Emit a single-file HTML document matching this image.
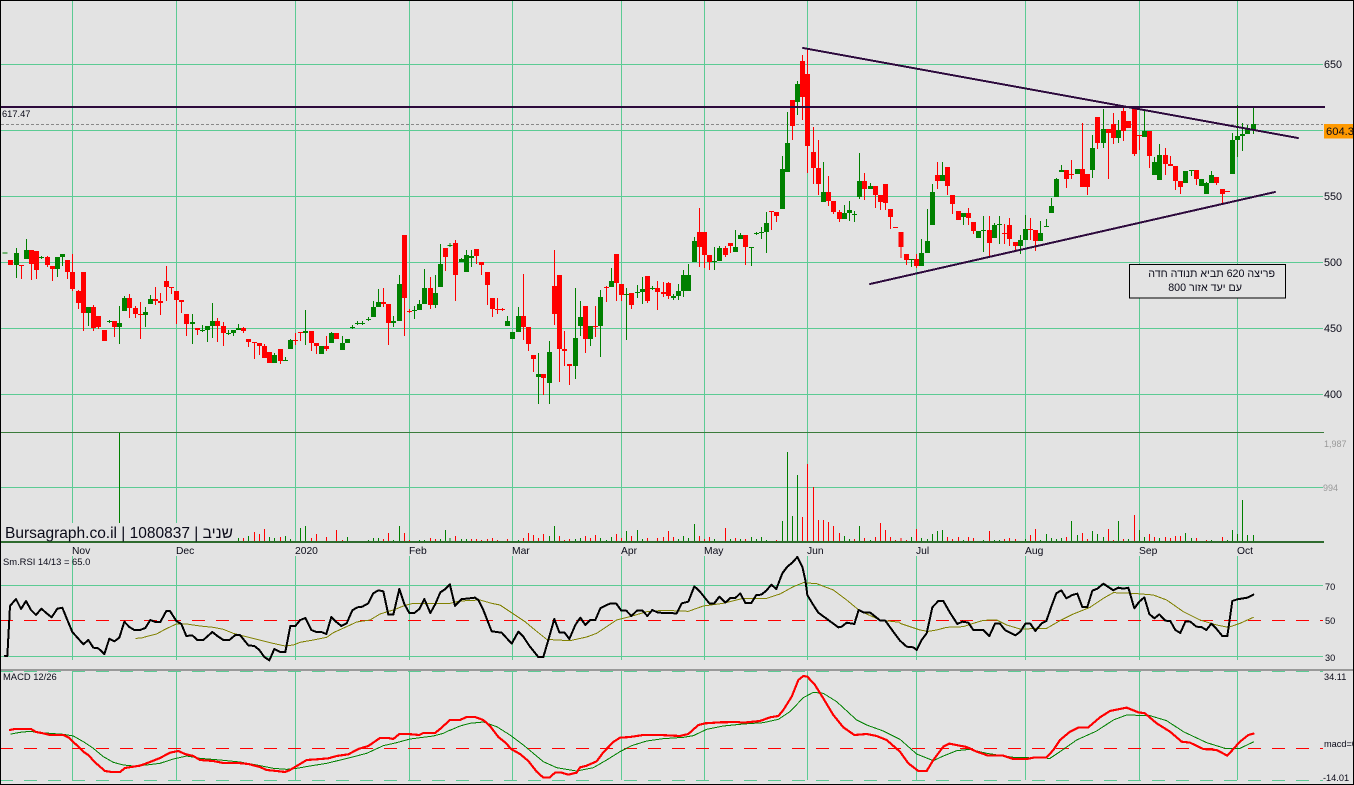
<!DOCTYPE html>
<html lang="en"><head><meta charset="utf-8"><title>Bursagraph</title>
<style>
html,body{margin:0;padding:0;background:#e3e3e3;width:1354px;height:785px;overflow:hidden}
svg{display:block;position:absolute;left:0;top:0}
text{font-family:"Liberation Sans","Noto Sans CJK JP",sans-serif;fill:#0a0a18}
.c{shape-rendering:crispEdges;fill:none}
.w3{stroke-width:3}.b{stroke-width:15}
.g{stroke:#008000}.r{stroke:#ff0000}
.l{fill:none;shape-rendering:crispEdges;stroke-linejoin:round;stroke-linecap:round}
.k{stroke:#000;stroke-width:6}.o{stroke:#808000;stroke-width:3}.m{stroke:#ff0000;stroke-width:6.5}.n{stroke:#008000;stroke-width:3}
</style></head><body>
<svg width="1354" height="785" viewBox="0 0 1354 785" xmlns="http://www.w3.org/2000/svg">
<rect width="1354" height="785" fill="#e3e3e3"/>
<!-- grid -->
<path class="c" stroke="#5ccb94" d="M72.5 1V432M176.5 1V432M295.5 1V432M409.5 1V432M512.5 1V432M621.5 1V432M704.5 1V432M807.5 1V432M916.5 1V432M1025.5 1V432M1139.5 1V432M1237.5 1V432
M72.5 433V541M176.5 433V541M295.5 433V541M409.5 433V541M512.5 433V541M621.5 433V541M704.5 433V541M807.5 433V541M916.5 433V541M1025.5 433V541M1139.5 433V541M1237.5 433V541
M72.5 556V660M176.5 556V660M295.5 556V660M409.5 556V660M512.5 556V660M621.5 556V660M704.5 556V660M807.5 556V660M916.5 556V660M1025.5 556V660M1139.5 556V660M1237.5 556V660
M72.5 671V780M176.5 671V780M295.5 671V780M409.5 671V780M512.5 671V780M621.5 671V780M704.5 671V780M807.5 671V780M916.5 671V780M1025.5 671V780M1139.5 671V780M1237.5 671V780
M1 64.5H1323M1 130.5H1323M1 196.5H1323M1 262.5H1323M1 328.5H1323M1 394.5H1323M1 487.5H1323M1 585.5H1323M1 656.5H1323"/>
<path class="c" stroke="#5ccb94" stroke-dasharray="13 11" d="M0 671.5H1323M0 780.5H1323"/>
<path class="c" stroke="#888" stroke-dasharray="3 2" d="M1 124.5H1323"/>
<path class="c" stroke="#3b7b3b" d="M1 432.5H1324"/>

<!-- Candles A -->
<g transform="translate(0,90) scale(.33333)">
<path class="c g w3" d="M49 474V564M79 447V507M124 498V507M172 501V561M187 492V528M265 651V708M328 690V699M358 648V762M373 618V663M436 651V711M451 615V642M577 672V762M607 705V726M622 708V756M637 639V744M685 720V735M700 720V738M715 702V720M823 789V819M856 801V813M871 747V777M916 660V765M994 726V759M1027 738V780M1057 705V717M1072 693V705M1087 693V705M1105 681V693M1120 633V681M1135 597V651M1180 678V711M1198 555V693M1243 648V687M1258 630V660M1273 537V642M1306 555V654M1321 462V591"/>
<path class="c r w3" d="M64 525V567M94 480V570M109 483V567M142 498V531M157 528V573M202 510V567M217 492V603M235 600V657M250 546V723M280 645V723M295 678V717M343 693V741M388 612V684M406 648V684M421 636V747M466 591V645M481 609V675M499 528V633M514 591V612M529 603V702M544 630V669M559 672V738M592 714V735M652 684V756M670 696V768M730 711V729M745 747V771M763 756V807M778 759V795M793 762V804M841 777V822M886 729V765M901 726V753M934 723V783M949 759V792M979 738V783M1150 594V651M1165 642V765M1213 435V738M1228 657V669M1291 561V657M1336 474V543"/>
<path class="c g b" d="M15 487V490M49 489V525M79 480V507M124 501V504M172 501V537M187 492V501M265 651V669M328 693V696M358 699V711M373 624V663M436 666V675M451 627V642M577 696V702M607 720V723M622 708V720M637 693V708M685 729V732M700 720V729M715 714V720M823 795V819M856 810V813M871 750V777M916 723V729M964 768V792M994 729V759M1027 759V780M1042 747V759M1057 711V714M1072 699V702M1087 699V702M1105 687V690M1120 651V681M1135 636V651M1180 693V699M1198 582V693M1243 660V663M1258 642V660M1273 594V642M1306 609V645M1321 522V591"/>
<path class="c r b" d="M31 510V525M64 525V528M94 480V522M109 483V540M142 501V525M157 528V537M202 510V546M217 546V597M235 603V639M250 546V669M280 651V714M295 678V711M313 720V753M343 693V711M388 624V654M406 654V672M421 672V675M466 627V633M481 633V639M499 573V591M514 591V594M529 603V630M544 630V636M559 672V702M592 714V720M652 693V708M670 708V729M730 714V723M745 747V756M763 756V759M778 759V768M793 768V804M808 786V819M841 777V813M886 750V753M901 726V729M934 723V759M949 759V768M979 768V777M1009 729V747M1150 636V642M1165 642V699M1213 435V624M1228 663V666M1291 594V645M1336 474V501"/>
</g>
<!-- Candles B -->
<g transform="translate(450,40) scale(.33333)">
<path class="c g w3" d="M0 609V621M34 654V666M49 630V696M64 630V681M172 828V858M205 801V876M265 939V1092M298 903V1092M376 744V1017M391 783V888M421 858V918M451 750V951M484 684V741M529 744V900M562 735V774M577 711V792M607 738V750M670 762V780M685 732V780M700 690V771M715 672V753M733 591V666M793 621V690M808 618V663M856 570V636M871 579V597M904 621V678M919 576V585M934 561V597M949 516V639M997 348V507M1012 216V396M1042 123V225M1120 366V486M1183 495V537M1198 483V543M1213 513V546M1228 339V477M1261 429V447"/>
<path class="c r w3" d="M16 600V783M79 627V672M94 666V705M112 696V795M127 774V831M142 774V822M157 804V813M220 702V900M235 861V933M250 945V996M280 1002V1065M313 630V855M328 705V1026M343 873V978M358 972V1035M406 798V939M436 798V891M469 738V786M499 642V783M514 732V783M544 759V807M592 708V789M622 723V810M640 726V771M655 726V777M748 504V681M763 576V684M778 645V690M826 618V651M841 609V639M886 585V675M964 513V570M979 516V546M1027 180V300M1057 45V240M1072 25V399M1090 261V432M1105 300V465M1135 408V498M1150 483V522M1168 510V546M1243 399V480M1276 438V504M1291 465V510M1306 432V510M1321 507V567"/>
<path class="c g b" d="M0 615V618M34 657V666M49 645V696M64 648V654M172 843V858M187 876V897M205 828V876M265 1002V1011M298 936V1029M376 894V978M391 831V858M421 858V897M451 771V858M484 723V741M529 762V765M562 756V759M577 747V756M607 744V747M670 768V774M685 753V768M700 705V753M715 705V753M733 603V666M793 663V666M808 624V663M856 621V636M871 585V597M904 621V624M919 579V582M934 576V579M949 549V576M997 387V507M1012 309V396M1042 132V186M1120 456V486M1183 519V537M1198 510V519M1213 522V525M1228 423V471M1261 438V447"/>
<path class="c r b" d="M16 609V705M79 627V648M94 666V675M112 696V735M127 774V807M142 807V810M157 807V810M220 828V861M235 861V912M250 945V957M280 1002V1014M313 738V822M328 705V927M343 927V933M358 972V978M406 798V897M436 858V861M469 741V744M499 642V729M514 732V765M544 759V795M592 708V783M622 744V756M640 756V762M655 729V768M748 576V621M763 576V645M778 645V666M826 624V645M841 609V618M886 585V621M964 513V516M979 516V528M1027 180V258M1057 63V171M1072 102V318M1090 336V384M1105 384V432M1135 456V483M1150 483V516M1168 516V537M1243 423V447M1276 438V465M1291 465V486M1306 432V489M1321 507V531M1336 561V564"/>
</g>
<!-- Candles C -->
<g transform="translate(900,40) scale(.33333)">
<path class="c g w3" d="M34 657V681M64 597V678M82 507V639M97 432V555M127 366V423M190 519V555M250 528V636M283 549V594M298 528V612M361 585V642M376 525V600M421 543V603M439 537V561M454 474V519M469 414V471M484 375V396M532 387V402M577 285V414M610 207V324M655 240V309M733 213V291M763 351V405M778 312V420M856 393V429M874 390V408M919 426V462M934 393V429M997 279V402M1012 195V351M1027 249V333M1042 255V282M1060 204V282"/>
<path class="c r w3" d="M3 576V654M19 642V675M49 642V684M112 366V447M142 381V465M157 465V522M205 504V555M220 546V582M268 528V648M313 552V612M328 534V618M346 606V633M391 534V600M406 570V633M499 390V444M514 360V417M547 249V441M562 402V465M592 231V327M625 267V417M640 219V312M670 204V303M703 198V348M718 285V330M748 273V384M796 324V405M811 348V378M826 378V450M841 423V462M889 390V435M949 411V435M967 447V489"/>
<path class="c g b" d="M34 657V660M64 639V678M82 603V639M97 456V555M127 405V423M190 519V531M235 573V594M250 570V573M283 555V594M298 552V555M361 600V618M376 567V600M421 579V603M439 558V561M454 498V519M469 417V471M484 390V396M532 387V402M577 324V390M610 267V309M655 270V294M733 273V291M763 366V405M778 345V420M856 393V429M874 390V393M904 417V438M919 429V462M934 405V429M997 300V402M1012 288V300M1027 282V288M1042 267V282M1060 252V270"/>
<path class="c r b" d="M3 576V621M19 642V660M49 657V678M112 405V423M142 381V438M157 465V492M175 513V540M205 519V534M220 546V573M268 570V609M313 579V582M328 555V597M346 606V618M391 567V570M406 570V603M499 390V417M514 402V405M547 387V441M562 402V441M592 231V309M625 267V279M640 252V294M670 213V273M685 243V264M703 204V342M718 285V288M748 273V348M796 345V372M811 372V378M826 378V423M841 423V441M889 390V417M949 411V429M967 447V462M982 453V456"/>
</g>

<!-- Horizontal + trend lines -->
<path class="c" stroke="#2d0a3c" stroke-width="2" d="M1 107H1325"/>
<path class="l" stroke="#2d0a3c" stroke-width="2" d="M803 48L1298 138M870 284L1275 192" stroke-linecap="butt"/>

<!-- Volume bars -->
<path class="c" stroke="#008000" d="M119.5 433V541"/>
<g transform="translate(0,500) scale(.33333)">
<path class="c g w3" d="M700 126V114M715 126V114M745 126V108M808 126V111M823 126V114M856 126V108M871 126V117M901 126V84M916 126V78M1042 126V111M1105 126V120M1120 126V114M1135 126V114M1180 126V120M1198 126V78M1258 126V120M1273 126V120M1321 126V117M1336 126V90"/>
<path class="c r w3" d="M730 126V114M763 126V96M778 126V102M793 126V87M841 126V111M934 126V114M949 126V102M979 126V111M1009 126V90M1027 126V120M1150 126V117M1165 126V99M1213 126V99M1228 126V120M1291 126V114M1306 126V117"/>
</g>
<g transform="translate(450,430) scale(.33333)">
<path class="c g w3" d="M0 336V324M34 336V327M49 336V327M205 336V330M298 336V318M313 336V288M376 336V327M391 336V324M451 336V324M469 336V330M484 336V321M529 336V303M562 336V300M577 336V327M685 336V327M700 336V318M715 336V324M733 336V282M793 336V327M841 336V327M871 336V327M904 336V321M919 336V327M934 336V321M949 336V330M997 336V273M1012 336V66M1027 336V258M1042 336V135M1183 336V318M1198 336V327M1228 336V288M1261 336V330"/>
<path class="c r w3" d="M16 336V318M64 336V327M79 336V327M94 336V330M112 336V327M127 336V324M142 336V330M172 336V327M220 336V324M235 336V309M250 336V315M265 336V324M280 336V312M328 336V318M343 336V330M358 336V327M406 336V318M421 336V324M436 336V315M499 336V312M514 336V324M544 336V318M592 336V324M622 336V324M640 336V321M655 336V303M670 336V321M748 336V318M763 336V327M778 336V321M826 336V294M856 336V324M886 336V327M979 336V330M1057 336V261M1072 336V102M1090 336V171M1105 336V270M1120 336V270M1135 336V276M1150 336V288M1168 336V309M1213 336V327M1243 336V324M1276 336V321M1291 336V279M1306 336V300M1321 336V321M1336 336V330"/>
</g>
<g transform="translate(900,430) scale(.33333)">
<path class="c g w3" d="M34 336V321M64 336V324M82 336V327M97 336V312M112 336V303M127 336V300M190 336V330M250 336V330M283 336V330M298 336V330M376 336V327M421 336V330M439 336V312M454 336V324M469 336V327M484 336V324M514 336V273M532 336V315M577 336V303M592 336V312M610 336V321M655 336V273M685 336V327M718 336V300M733 336V321M778 336V324M856 336V309M874 336V324M934 336V330M982 336V330M997 336V300M1012 336V312M1027 336V210M1042 336V315M1060 336V315"/>
<path class="c r w3" d="M3 336V324M19 336V330M49 336V297M142 336V321M157 336V327M175 336V321M205 336V321M220 336V324M268 336V303M313 336V327M328 336V324M346 336V327M391 336V315M406 336V297M499 336V321M547 336V309M562 336V327M625 336V297M640 336V330M670 336V327M703 336V255M748 336V312M763 336V321M796 336V321M811 336V324M826 336V318M841 336V318M889 336V324M919 336V330M967 336V321"/>
</g>
<rect x="1" y="523" width="233" height="18" fill="#e3e3e3"/>
<path class="c" stroke="#2f6b2f" stroke-width="2" d="M1 542H1324"/>

<!-- Red dashed zero lines -->
<path class="c" stroke="#ff0000" stroke-dasharray="13 11" d="M0 620.5H1323M0 748.5H1323"/>
<!-- Separator -->
<path class="c" stroke="#999" stroke-width="2" d="M0 670H1354"/>

<!-- RSI + MACD -->
<g transform="translate(0,500) scale(.33333)">
<polyline class="l o" points="408,415 425,414 445,408 470,402 495,388 529,372 560,372 600,378 640,382 670,388 700,400 730,408 770,418 810,428 855,438 880,435 900,427 940,420 980,412 1000,398 1040,380 1070,366 1110,360 1140,342 1180,330 1215,316 1240,310 1290,310 1350,310"/>
<polyline class="l k" points="15,468 22,468 30,318 48,297 63,327 78,303 93,330 108,345 124,326 140,340 155,352 172,326 187,323 202,360 217,396 235,416 250,433 265,420 280,443 295,445 313,462 328,416 343,424 358,413 373,365 388,381 403,390 420,390 436,384 451,360 466,366 481,366 499,333 510,333 529,363 544,372 559,408 577,406 592,420 610,420 637,396 652,408 670,420 688,420 706,405 720,405 745,436 763,438 778,450 793,471 808,481 823,447 841,456 856,456 871,378 886,378 901,360 916,354 934,390 949,396 964,396 979,402 994,351 1009,366 1024,378 1040,370 1057,331 1072,322 1087,320 1105,310 1120,280 1135,271 1150,274 1165,344 1180,344 1198,267 1213,312 1228,339 1243,339 1258,327 1273,297 1291,339 1306,312 1321,277 1336,267 1350,253"/>
<polyline class="l n" points="33,702 60,697 90,694 120,698 150,700 190,703 220,708 250,725 280,745 310,770 340,787 370,795 400,798 440,795 480,790 520,777 560,768 600,775 660,780 720,786 770,795 820,805 860,808 890,805 930,798 980,790 1050,773 1100,760 1150,737 1190,728 1230,717 1300,708 1330,700 1350,690"/>
<polyline class="l m" points="30,690 45,687 93,687 108,696 125,699 150,705 170,705 190,705 205,712 235,740 250,755 265,765 285,787 315,813 335,816 360,816 375,804 400,800 420,797 450,786 480,774 510,758 535,753 555,762 580,768 600,780 640,783 670,789 715,789 745,792 780,801 800,810 830,813 855,816 870,810 920,780 950,778 985,775 1010,768 1045,763 1075,747 1105,738 1140,714 1165,714 1180,717 1198,702 1225,702 1258,705 1270,699 1305,699 1320,687 1350,660"/>
</g>
<g transform="translate(450,430) scale(.33333)">
<polyline class="l o" points="0,520 30,513 90,510 125,520 150,525 195,555 225,575 255,600 290,628 320,630 360,632 410,621 440,610 470,590 500,570 540,560 590,545 640,541 715,544 760,528 820,520 880,505 950,505 990,492 1030,470 1060,458 1100,461 1150,480 1190,510 1230,543 1290,570 1350,577"/>
<polyline class="l k" points="0,465 15,528 35,507 50,506 75,503 85,510 100,540 125,604 155,608 185,641 205,605 220,620 240,650 265,681 280,681 295,630 313,567 328,607 343,607 358,627 376,585 391,563 406,585 421,570 436,570 451,535 470,525 480,521 499,521 514,542 529,542 544,558 562,541 577,541 592,558 607,540 622,547 640,549 680,550 695,520 715,515 733,469 750,485 778,520 793,520 808,500 826,518 841,504 856,504 871,490 886,519 904,519 919,495 934,494 949,482 964,464 979,477 997,430 1012,410 1027,398 1042,381 1057,410 1066,450 1072,495 1090,525 1105,548 1135,570 1165,592 1175,590 1190,578 1213,582 1226,540 1243,548 1261,548 1291,572 1306,572 1321,593 1350,632"/>
<polyline class="l n" points="0,901 30,888 60,880 100,876 140,890 180,915 220,945 250,970 280,995 320,1013 380,1023 430,1013 470,990 510,965 545,947 590,933 640,926 700,922 730,917 770,898 820,888 880,882 940,878 985,868 1020,845 1060,803 1090,787 1120,790 1160,815 1220,870 1250,885 1300,903 1350,928"/>
<polyline class="l m" points="0,870 30,870 50,861 75,861 100,870 120,888 145,921 165,937 185,958 210,972 235,993 260,1025 280,1043 298,1043 315,1028 335,1028 355,1034 380,1028 390,1012 410,1007 440,994 460,967 490,936 510,923 540,921 580,915 630,915 690,918 715,912 745,885 765,880 810,877 860,876 880,878 930,873 960,862 985,858 1000,840 1025,800 1045,750 1060,738 1072,740 1095,765 1120,805 1150,855 1180,892 1213,915 1250,912 1280,918 1310,930 1350,965"/>
</g>
<g transform="translate(900,430) scale(.33333)">
<polyline class="l o" points="0,580 30,590 60,600 85,604 110,600 140,592 190,590 220,580 250,571 290,570 320,585 360,597 440,595 480,572 520,552 570,532 610,505 640,488 700,490 760,495 800,510 850,545 900,570 950,585 985,592 1020,580 1060,562"/>
<polyline class="l k" points="0,632 20,650 40,652 50,660 65,630 80,610 97,532 115,513 130,513 150,548 172,582 187,575 205,578 220,600 250,600 268,618 285,581 300,581 315,600 346,616 361,605 376,581 391,581 406,603 425,580 439,573 454,530 469,490 484,481 499,505 517,495 532,491 547,531 562,531 577,482 592,476 610,461 640,481 655,473 670,476 685,473 703,535 718,515 733,502 748,552 763,565 778,553 796,572 811,573 826,600 841,609 856,575 871,575 889,590 904,591 919,600 934,581 949,596 967,618 982,618 997,513 1012,508 1042,503 1060,494"/>
<polyline class="l n" points="0,928 50,972 100,992 130,978 170,962 210,958 260,970 340,982 450,985 480,965 530,930 590,903 640,870 680,855 750,857 800,872 850,905 920,938 975,955 1020,955 1060,936"/>
<polyline class="l m" points="0,965 25,1000 55,1023 80,1023 100,990 130,950 148,941 200,951 230,965 265,977 310,977 340,987 380,987 400,983 440,982 460,960 480,930 510,905 535,893 565,892 600,862 630,843 680,833 715,847 735,850 770,880 810,905 845,935 870,938 910,957 950,960 982,977 1020,935 1045,915 1060,911"/>
</g>

<!-- Note box -->
<rect x="1129.5" y="264.5" width="156" height="33.5" stroke="#000" class="c" style="fill:#e3e3e3"/>
<text x="1275" y="277" font-size="10.7" direction="rtl" text-anchor="start" style="direction:rtl">פריצה 620 תביא תנודה חדה</text>
<text x="1242" y="291" font-size="10.7" direction="rtl" text-anchor="start" style="direction:rtl">עם יעד אזור 800</text>

<!-- Labels -->
<text x="2" y="117" font-size="9.3">617.47</text>
<text x="5" y="538" font-size="15.5">Bursagraph.co.il | 1080837 | שניב</text>
<g font-size="10.3">
<text x="72" y="554">Nov</text><text x="176" y="554">Dec</text><text x="295" y="554">2020</text><text x="409" y="554">Feb</text><text x="512" y="554">Mar</text><text x="621" y="554">Apr</text><text x="704" y="554">May</text><text x="807" y="554">Jun</text><text x="916" y="554">Jul</text><text x="1025" y="554">Aug</text><text x="1139" y="554">Sep</text><text x="1237" y="554">Oct</text>
</g>
<text x="3" y="565" font-size="9.4">Sm.RSI 14/13 = 65.0</text>
<text x="3" y="680" font-size="9.4">MACD 12/26</text>
<g font-size="10.8">
<text x="1324" y="68">650</text><text x="1324" y="200">550</text><text x="1324" y="266">500</text><text x="1324" y="332">450</text><text x="1324" y="398">400</text>
</g>
<rect x="1324" y="124" width="30" height="14.5" fill="#ff9900"/>
<text x="1326" y="135" font-size="11.2">604.3</text>
<text x="1324" y="447" font-size="9" style="fill:#999">1,987</text>
<text x="1323" y="491" font-size="9" style="fill:#999">994</text>
<g font-size="9.2">
<text x="1325" y="590">70</text><text x="1325" y="624">50</text><text x="1325" y="661">30</text>
<text x="1324" y="680">34.11</text><text x="1324" y="747">macd=0</text><text x="1323" y="781">-14.01</text>
</g>
<!-- Frame -->
<rect x=".5" y=".5" width="1353" height="784" fill="none" stroke="#000" class="c"/>
</svg>
</body></html>
